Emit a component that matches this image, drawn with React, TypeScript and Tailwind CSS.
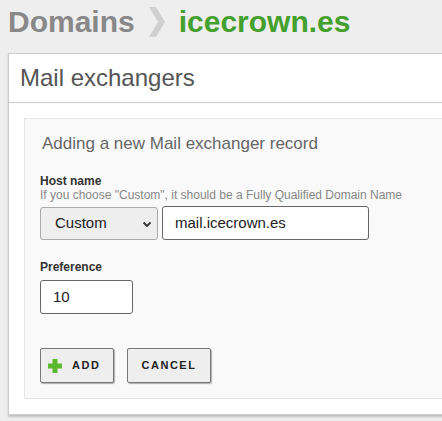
import React from 'react';

const font = { fontFamily: '"Liberation Sans", Arial, sans-serif' };

const App: React.FC = () => {
    return (
        <div className="w-[442px] h-[421px] overflow-hidden bg-[#eeeeee] text-[#333]" style={font}>
            <div className="flex items-center h-[42px] pl-[8px] pt-[2px] text-[30px] font-bold leading-none">
                <span className="text-[#888888]">Domains</span>
                <svg width="16" height="30" viewBox="0 0 16 30" className="mx-[14px]">
                    <polygon points="0,0 7,0 16,15 7,30 0,30 9,15" fill="#d0d0d0" />
                </svg>
                <span className="text-[#43a02c]">icecrown.es</span>
            </div>

            <div className="ml-[8px] mt-[11px] w-[460px] bg-white border border-[#cccccc] shadow-[0_2px_2px_rgba(0,0,0,0.2)]">
                <div className="h-[49px] flex items-center pl-[11px] border-b border-[#cccccc]">
                    <h2 className="text-[24px] text-[#555555] font-normal">Mail exchangers</h2>
                </div>

                <div className="p-[15px]">
                    <div className="bg-[#f9f9f9] border border-[#e6e6e6] pl-[15px] pt-[14px] pb-[14px] h-[281px]">
                        <h3 className="text-[17px] text-[#666666] pl-[2px] leading-[22px]">
                            Adding a new Mail exchanger record
                        </h3>

                        <div className="mt-[19px]">
                            <label className="block text-[12px] font-bold text-[#333] leading-[14px]">Host name</label>
                            <p className="text-[12px] text-[#888888] leading-[15px]">
                                If you choose "Custom", it should be a Fully Qualified Domain Name
                            </p>
                            <div className="flex gap-[4px] mt-[4px]">
                                <div className="w-[118px] h-[33px] bg-[#eeeeee] border border-[#aaaaaa] rounded-[3px] flex items-center justify-between pl-[14px] pr-[4px] text-[15px] text-[#222]">
                                    <span>Custom</span>
                                    <svg width="12" height="12" viewBox="0 0 12 12">
                                        <path d="M2.5 4.5 L6 8 L9.5 4.5" fill="none" stroke="#333" strokeWidth="1.8" />
                                    </svg>
                                </div>
                                <div className="w-[207px] h-[34px] -mt-[1px] bg-white border border-[#666666] rounded-[3px] flex items-center pl-[12px] text-[15px] text-[#222]">
                                    mail.icecrown.es
                                </div>
                            </div>
                        </div>

                        <div className="mt-[20px]">
                            <label className="block text-[12px] font-bold text-[#333] leading-[14px]">Preference</label>
                            <div className="mt-[6px] w-[93px] h-[34px] bg-white border border-[#666666] rounded-[3px] flex items-center pl-[12px] text-[15px] text-[#222]">
                                10
                            </div>
                        </div>

                        <div className="flex gap-[13px] mt-[34px]">
                            <button className="w-[74px] h-[35px] bg-[#eeeeee] border border-[#777777] rounded-[2px] shadow-[1px_1px_1px_rgba(0,0,0,0.3)] flex items-center pl-[7px] gap-[10px] text-[11px] font-bold tracking-[1.5px] text-[#222]">
                                <svg width="14" height="14" viewBox="0 0 14 14">
                                    <path d="M4.5 0 H9.5 V4.5 H14 V9.5 H9.5 V14 H4.5 V9.5 H0 V4.5 H4.5 Z" fill="#5cb82e" />
                                </svg>
                                ADD
                            </button>
                            <button className="w-[84px] h-[35px] bg-[#eeeeee] border border-[#777777] rounded-[2px] shadow-[1px_1px_1px_rgba(0,0,0,0.3)] flex items-center justify-center text-[11px] font-bold tracking-[1.5px] text-[#222]">
                                CANCEL
                            </button>
                        </div>
                    </div>
                </div>
            </div>
        </div>
    );
};

export default App;
